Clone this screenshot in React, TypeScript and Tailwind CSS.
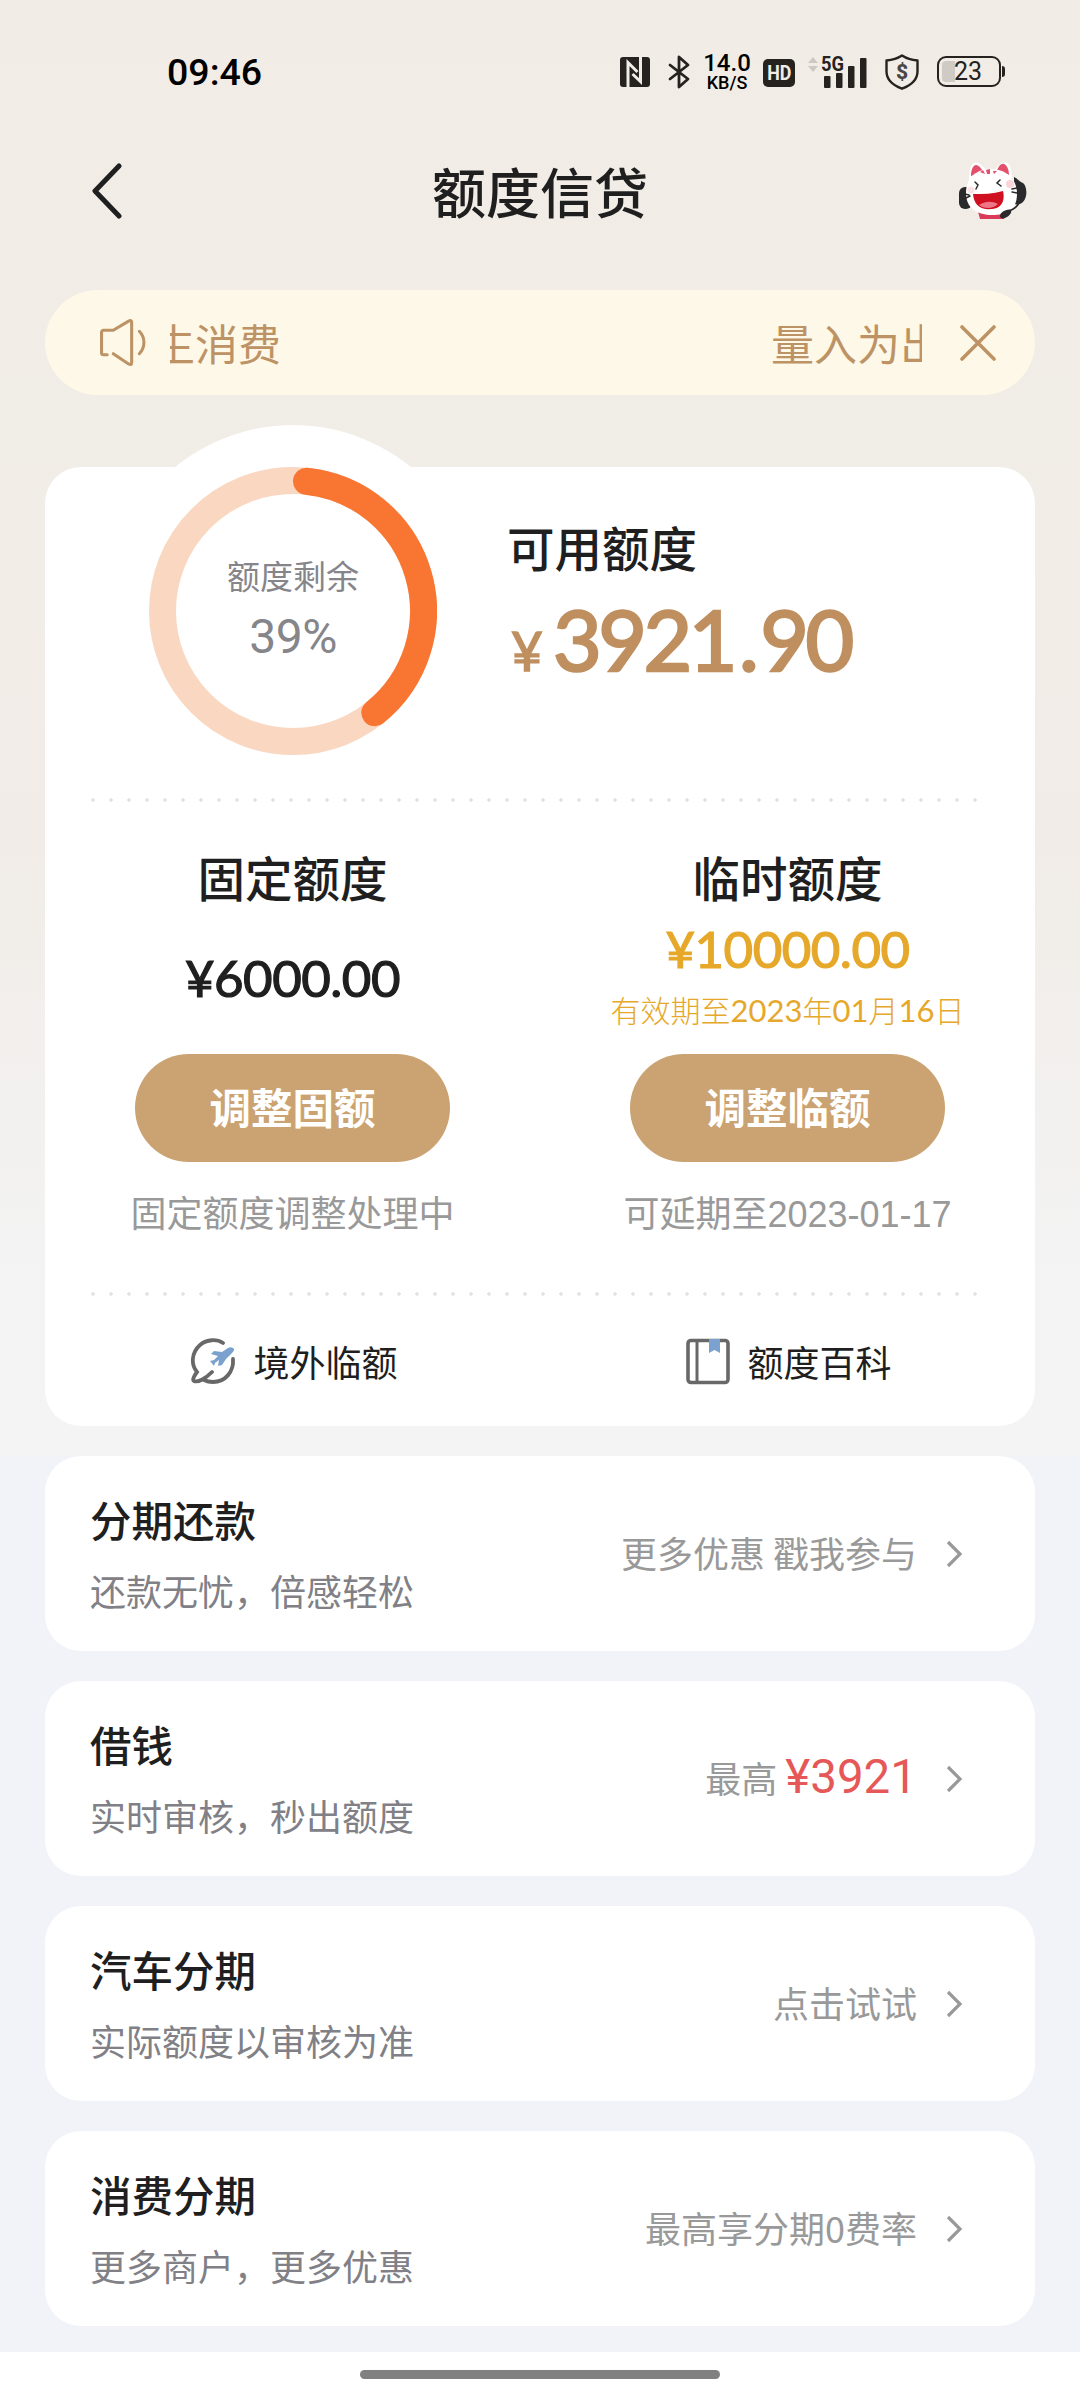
import type { ReactNode } from "react";

const offers: Array<{
  title: string;
  subtitle: string;
  hint: string;
  amount?: string;
}> = [
  {
    title: "分期还款",
    subtitle: "还款无忧，倍感轻松",
    hint: "更多优惠 戳我参与",
  },
  {
    title: "借钱",
    subtitle: "实时审核，秒出额度",
    hint: "最高",
    amount: "¥3921",
  },
  {
    title: "汽车分期",
    subtitle: "实际额度以审核为准",
    hint: "点击试试",
  },
  {
    title: "消费分期",
    subtitle: "更多商户，更多优惠",
    hint: "最高享分期0费率",
  },
];

function StatusBar() {
  return (
    <div className="flex h-[142px] items-center pl-[167px] pt-px font-[Roboto,sans-serif] text-[#26221f]">
      <span className="w-[453px] text-[37.5px] font-medium leading-[44px] text-black">
        09:46
      </span>
      <svg className="h-[30px] w-[30px]" viewBox="0 0 30 30">
        <rect width="30" height="30" rx="3" fill="currentColor" />
        <path
          fill="none"
          stroke="#f1ece6"
          strokeWidth="3"
          d="M8 30V5.500L17.500 15M20.500 0v24.500L12.500 17"
        />
      </svg>
      <svg className="ml-[18px] h-[34px] w-[23px]" viewBox="0 0 23 34">
        <path
          fill="none"
          stroke="currentColor"
          strokeWidth="2.800"
          strokeLinejoin="round"
          strokeLinecap="round"
          d="M2 10l18 14-9 8V2l9 8L2 24"
        />
      </svg>
      <div className="ml-[11px] flex w-[50px] flex-col items-center text-black">
        <span className="text-[24px] font-medium leading-[22px]">14.0</span>
        <span className="text-[18px] font-medium leading-[17px]">KB/S</span>
      </div>
      <span className="ml-[11px] mt-[3px] flex h-[28px] w-[32px] items-center justify-center rounded-[5px] bg-[#26221f] text-[21px] font-bold leading-none text-[#f1ece6]">
        <span className="scale-x-85">HD</span>
      </span>
      <svg className="ml-[12px] h-[34px] w-[62px]" viewBox="0 0 62 34">
        <path fill="#cdc8c2" d="M1 8l5-6 5 6zM1 11h10l-5 6z" />
        <text
          x="14"
          y="16"
          fontSize="20"
          fontWeight="700"
          textLength="23"
          lengthAdjust="spacingAndGlyphs"
          fill="currentColor"
        >
          5G
        </text>
        <rect x="17" y="21" width="6.500" height="12" rx="1" fill="currentColor" />
        <rect x="29" y="18" width="6.500" height="15" rx="1" fill="currentColor" />
        <rect x="41" y="11" width="6.500" height="22" rx="1" fill="currentColor" />
        <rect x="53" y="3" width="6.500" height="30" rx="1" fill="currentColor" />
      </svg>
      <svg className="ml-[16px] h-[36px] w-[34px]" viewBox="0 0 34 36">
        <path
          fill="none"
          stroke="currentColor"
          strokeWidth="2.400"
          strokeLinejoin="round"
          d="M17 1.500c4.500 3 9 4.500 15.500 5v11c0 8-6 13.500-15.500 17.200C7.500 31 1.500 25.500 1.500 17.500v-11c6.500-.5 11-2 15.500-5Z"
        />
        <text x="17" y="25" fontSize="21" fontWeight="800" textAnchor="middle" fill="#4a4643">
          $
        </text>
      </svg>
      <div className="ml-[18px] flex h-[31px] w-[64px] items-center rounded-[9px] border-[2.500px] border-[#26221f] p-[3px]">
        <span className="h-full w-[13px] rounded-l-[4px] bg-[#cfcac4]" />
        <span className="-ml-px text-[25px] leading-none">23</span>
      </div>
      <span className="ml-px h-[11px] w-[3px] rounded-r-sm bg-[#26221f]" />
    </div>
  );
}

function ServiceCat() {
  return (
    <svg className="h-[62px] w-[72px]" viewBox="0 0 72 62">
      <rect x="2" y="27" width="13" height="22" rx="6" fill="#2a2a2c" />
      <path d="M57 17c4 2 5 4 9 6 4 3 5 14 0 19-2 2-5 3-9 2z" fill="#2a2a2c" />
      <path d="M20 48h32l-5 11H23z" fill="#d93a5a" />
      <path d="M12 20c0-9 1-15 5-17s9 3 12 7l-10 16zM55 22c0-10-1-17-5-19s-9 2-12 7l9 14z" fill="#fff" />
      <path d="M14 16c0-6 2-11 5-11s6 4 7 7zM40 10c2-4 4-7 7-6s5 6 5 11z" fill="#e2506b" />
      <path d="M9 33C9 17 20 9 34 9s26 9 26 25-11 21-25 21S9 49 9 33Z" fill="#fff" />
      <path d="M23 12l3-2 2 4zM29 10l4-1v5h-3zM36 11l4 0-3 3z" fill="#e2506b" />
      <circle cx="14" cy="30" r="3.500" fill="#fbe2e4" />
      <circle cx="53" cy="24" r="4" fill="#fbd5da" />
      <path
        d="M18 22l3 3-2 4M43 20l-3 3 4 3M8 34l4 1M9 38l4-2M55 29l5-1M55 32l5 1"
        fill="none"
        stroke="#2a2a2c"
        strokeWidth="1.500"
        strokeLinecap="round"
      />
      <path d="M16 34c10 0 20 0 30-3 2 8 0 17-11 18-12 1-18-4-19-15Z" fill="#cf1020" />
      <path d="M22 45c7-4 13-4 19-1-5 5-14 5-19 1Z" fill="#ee7585" />
      <path d="M62 43c-3 5-6 7-11 8" fill="none" stroke="#2a2a2c" strokeWidth="1.800" />
      <path d="M43 56c0-4 7-7 10-6s0 5-3 7-7 2-7-1Z" fill="#2a2a2c" />
    </svg>
  );
}

function Header() {
  return (
    <header className="flex h-[98px] items-center justify-between pl-[91px] pr-[51px]">
      <svg className="h-[56px] w-[72px]" viewBox="0 0 72 56">
        <path
          fill="none"
          stroke="#1f1f1f"
          strokeWidth="5"
          strokeLinecap="round"
          strokeLinejoin="round"
          d="M28 3 4 28l24 25"
        />
      </svg>
      <h1 className="pr-[40px] text-[54px] font-medium leading-[64px]">额度信贷</h1>
      <ServiceCat />
    </header>
  );
}

function Notice() {
  return (
    <div className="mx-[45px] mt-[50px] flex h-[105px] items-center rounded-full bg-[#fdf8e7] pl-[54px] text-[#bd9365]">
      <svg className="h-[49px] w-[50px]" viewBox="0 0 47 48">
        <g
          fill="none"
          stroke="currentColor"
          strokeWidth="3"
          strokeLinecap="round"
          strokeLinejoin="round"
        >
          <path d="M7 36H3.500a2 2 0 0 1-2-2V14a2 2 0 0 1 2-2H13L28 3c2-1 3-.5 3 1.500v39c0 2-1 2.500-3 1.500L13 35" />
          <path d="M38.500 13c3 3 4.500 6 4.500 11s-1.500 8-4.500 11" />
        </g>
      </svg>
      <div className="ml-[21px] flex w-[752px] justify-between overflow-hidden whitespace-nowrap text-[43px] leading-[60px]">
        <span className="-ml-[18px] -mt-[2px]">生消费</span>
        <span className="-mr-[21px] -mt-[2px]">量入为出</span>
      </div>
      <svg className="ml-[38px] h-[36px] w-[36px]" viewBox="0 0 36 36">
        <path
          stroke="currentColor"
          strokeWidth="3.600"
          strokeLinecap="round"
          d="M2 2l32 32M34 2 2 34"
        />
      </svg>
    </div>
  );
}

function QuotaRing() {
  return (
    <div className="relative h-[288px] w-[288px]">
      <div className="absolute -inset-[42px] rounded-full bg-white" />
      <svg className="absolute inset-0" viewBox="0 0 288 288">
        <circle cx="144" cy="144" r="130.500" fill="none" stroke="#fad7c1" strokeWidth="27" />
        <path
          d="M157.500 14.200A130.500 130.500 0 0 1 225.800 245.700"
          fill="none"
          stroke="#f87532"
          strokeWidth="27"
          strokeLinecap="round"
        />
      </svg>
      <div className="relative flex h-full flex-col items-center pt-[82px] text-[#85858a]">
        <span className="text-[33px] leading-[52px]">额度剩余</span>
        <span className="mt-[8px] font-[Roboto,sans-serif] text-[48px] leading-[56px] tracking-[-0.5px]">
          39%
        </span>
      </div>
    </div>
  );
}

function DottedLine() {
  return (
    <div className="ml-[39px] mr-[51px] h-[4px] bg-[radial-gradient(circle,#e4e4e6_1.5px,transparent_2px)] bg-[length:18px_4px]" />
  );
}

function QuotaColumn({
  title,
  action,
  note,
  children,
}: {
  title: string;
  action: string;
  note: string;
  children: ReactNode;
}) {
  return (
    <div className="flex flex-col items-center pt-[45px]">
      <h3 className="text-[47.5px] font-medium leading-[60px]">{title}</h3>
      <div className="flex h-[147px] flex-col items-center justify-center">{children}</div>
      <button className="h-[108px] w-[315px] rounded-full bg-[#cba271] pb-[3px] text-[41.5px] font-bold text-white">
        {action}
      </button>
      <p className="mt-[27px] font-['Liberation_Sans','Noto_Sans_CJK_SC',sans-serif] text-[36px] leading-[52px] text-[#999]">
        {note}
      </p>
    </div>
  );
}

function QuotaCard() {
  return (
    <section className="mx-[45px] mt-[72px] h-[959px] rounded-[36px] bg-white">
      <div className="flex h-[331px] pl-[104px]">
        <QuotaRing />
        <div className="relative ml-[70px] pt-[50px]">
          <h2 className="text-[47.5px] font-medium leading-[60px]">可用额度</h2>
          <p className="mt-[12px] flex items-baseline font-[Lato,sans-serif] leading-[100px] text-[#bf8f5f] [-webkit-text-stroke:2.5px_#bf8f5f]">
            <span className="ml-[4px] w-[42px] text-[55px] [-webkit-text-stroke-width:1.500px]">¥</span>
            <span className="text-[84px] tracking-[-3.500px]">
              3921<span className="mx-[5px]">.</span>90
            </span>
          </p>
        </div>
      </div>
      <DottedLine />
      <div className="grid h-[490px] grid-cols-2">
        <QuotaColumn title="固定额度" action="调整固额" note="固定额度调整处理中">
          <p className="-mt-[6px] font-[Lato,sans-serif] text-[51px] leading-[60px] tracking-[-0.5px] [-webkit-text-stroke:1.2px_#1f1f1f]">
            ¥6000.00
          </p>
        </QuotaColumn>
        <QuotaColumn title="临时额度" action="调整临额" note="可延期至2023-01-17">
          <p className="-mt-[10px] font-[Lato,sans-serif] text-[51px] leading-[60px] tracking-[-0.5px] text-[#e6a82a] [-webkit-text-stroke:1.2px_#e6a82a]">
            ¥10000.00
          </p>
          <p className="mt-[9px] font-[Lato,'Noto_Sans_CJK_SC',sans-serif] text-[30px] font-light leading-[44px] text-[#e6a82a]">
            有效期至<span className="text-[31px] font-normal">2023</span>年
            <span className="text-[31px] font-normal">01</span>月
            <span className="text-[31px] font-normal">16</span>日
          </p>
        </QuotaColumn>
      </div>
      <DottedLine />
      <div className="grid h-[130px] grid-cols-2 text-[36px]">
        <a className="flex items-center justify-center pl-[3px]">
          <svg className="mr-[17px] h-[46px] w-[46px]" viewBox="0 0 46 46">
            <g fill="none" stroke="#686868" strokeWidth="3.800" strokeLinecap="round">
              <path d="M33 5C27 1 17 1 10 7 1 15 1 27 7 34c-3 4-5 8-3 9 4 2 12-3 18-9" />
              <path d="M43 21c1 13-8 23-20 23-4 0-7-1-9-2" />
            </g>
            <path
              fill="#7ba2cf"
              d="M43 10c2 1 1 3-1 5l-6 6-4 6-4 1 1-6-4 3-1 3-4-5 4-1 4-4-7-2 3-3 8 1 6-4c2-1 3-1 5 0Z"
            />
          </svg>
          <span>境外临额</span>
        </a>
        <a className="flex items-center justify-center pl-[3px]">
          <svg className="mr-[17px] h-[47px] w-[44px]" viewBox="0 0 44 47">
            <rect x="2" y="2.500" width="40" height="42" rx="3" fill="none" stroke="#686868" strokeWidth="3.600" />
            <path d="M11 2v43" stroke="#686868" strokeWidth="3" />
            <path d="M23 1h11v14l-5.500-3L23 15Z" fill="#7ba2cf" />
          </svg>
          <span>额度百科</span>
        </a>
      </div>
    </section>
  );
}

export default function App() {
  return (
    <div className="flex h-[2400px] w-[1080px] flex-col bg-[linear-gradient(#f1ede6_0px,#f1ece7_850px,#f3f3f3_1250px,#f4f4f4_1456px,#f2f3f8_1456px)] font-['Noto_Sans_CJK_SC',sans-serif] text-[#1f1f1f]">
      <StatusBar />
      <Header />
      <Notice />
      <QuotaCard />
      <main className="mt-[30px] flex flex-col gap-[30px] px-[45px]">
        {offers.map((offer) => (
          <a
            key={offer.title}
            className="flex h-[195px] items-center rounded-[36px] bg-white pl-[45px] pr-[72px]"
          >
            <div className="flex-1 pt-[2px]">
              <h3 className="text-[41.5px] font-medium leading-[64px]">{offer.title}</h3>
              <p className="mt-[7px] text-[36px] leading-[64px] text-[#808086]">
                {offer.subtitle}
              </p>
            </div>
            <span className="-mt-[3px] text-[36px] leading-[52px] text-[#999]">{offer.hint}</span>
            {offer.amount && (
              <span className="-mt-[3px] ml-[8px] font-[Roboto,sans-serif] text-[47.5px] leading-[52px] text-[#e65858]">
                {offer.amount}
              </span>
            )}
            <svg className="ml-[29px] h-[28px] w-[17px]" viewBox="0 0 17 28">
              <path fill="none" stroke="#999" strokeWidth="3.200" d="M2 2l12 12L2 26" />
            </svg>
          </a>
        ))}
      </main>
      <footer className="mt-[26px] flex flex-1 justify-center bg-white pt-[18px]">
        <div className="h-[9px] w-[360px] rounded-full bg-[#808080]" />
      </footer>
    </div>
  );
}
